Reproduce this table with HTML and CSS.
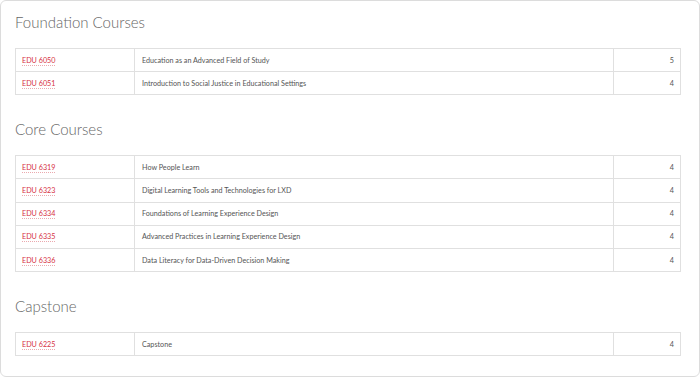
FILE: index.html
```html
<!DOCTYPE html>
<html lang="en">
<head>
<meta charset="utf-8">
<title>Courses</title>
<link rel="stylesheet" href="styles.css">
</head>
<body>
<div class="card">
  <section class="group">
    <h2 class="group-title">Foundation Courses</h2>
    <table class="courses">
      <tr><td class="code"><a href="#">EDU 6050</a></td><td class="title">Education as an Advanced Field of Study</td><td class="credits">5</td></tr>
      <tr><td class="code"><a href="#">EDU 6051</a></td><td class="title">Introduction to Social Justice in Educational Settings</td><td class="credits">4</td></tr>
    </table>
  </section>
  <section class="group">
    <h2 class="group-title">Core Courses</h2>
    <table class="courses">
      <tr><td class="code"><a href="#">EDU 6319</a></td><td class="title">How People Learn</td><td class="credits">4</td></tr>
      <tr><td class="code"><a href="#">EDU 6323</a></td><td class="title">Digital Learning Tools and Technologies for LXD</td><td class="credits">4</td></tr>
      <tr><td class="code"><a href="#">EDU 6334</a></td><td class="title">Foundations of Learning Experience Design</td><td class="credits">4</td></tr>
      <tr><td class="code"><a href="#">EDU 6335</a></td><td class="title">Advanced Practices in Learning Experience Design</td><td class="credits">4</td></tr>
      <tr><td class="code"><a href="#">EDU 6336</a></td><td class="title">Data Literacy for Data-Driven Decision Making</td><td class="credits">4</td></tr>
    </table>
  </section>
  <section class="group">
    <h2 class="group-title">Capstone</h2>
    <table class="courses">
      <tr><td class="code"><a href="#">EDU 6225</a></td><td class="title">Capstone</td><td class="credits">4</td></tr>
    </table>
  </section>
</div>
</body>
</html>
```
FILE: styles.css
```css
html, body {
  margin: 0;
  padding: 0;
  background: #fff;
}
body {
  font-family: Lato, "Open Sans", sans-serif;
  color: #555;
}
.card {
  box-sizing: border-box;
  width: 700px;
  height: 377px;
  border: 1px solid #dcdcdc;
  border-radius: 6px;
  padding: 10px 18px 0 14px;
  display: flex;
  flex-direction: column;
  gap: 22.8px;
}
.group-title {
  margin: 0 0 15px 0;
  font-weight: 300;
  font-size: 15px;
  line-height: 22px;
  color: #666;
}
.courses {
  width: 100%;
  border-collapse: collapse;
  font-size: 7.2px;
}
.courses td {
  border: 1px solid #e0e0e0;
  height: 23.2px;
  padding: 0 6px;
  box-sizing: border-box;
}
.courses .code {
  width: 119px;
}
.courses .credits {
  width: 67px;
  text-align: right;
}
.courses .title {
  padding-left: 7px;
}
.code a {
  color: #d6313f;
  text-decoration: none;
  border-bottom: 1px dotted #eba9ae;
}
```
